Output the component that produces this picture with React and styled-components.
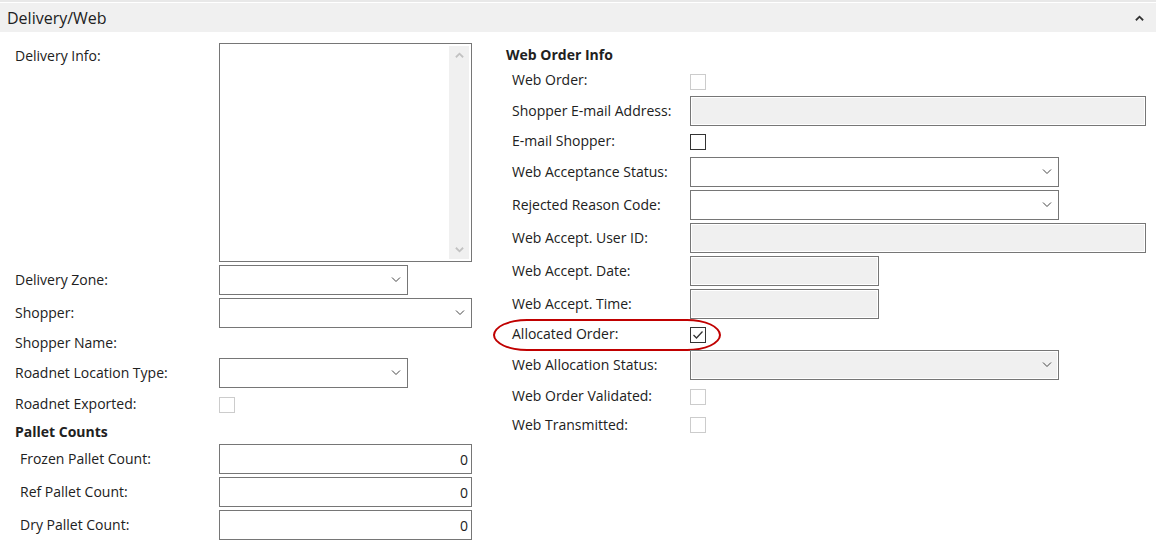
import React from "react";
import styled, { createGlobalStyle } from "styled-components";

const GlobalStyle = createGlobalStyle`
  body {
    margin: 0;
    background: #ffffff;
    font-family: "Open Sans", "Noto Sans", sans-serif;
    font-size: 14px;
    color: #212121;
  }
`;

const Page = styled.div`
  width: 1166px;
  height: 553px;
  overflow: hidden;
`;

const TopRule = styled.div`
  width: 1156px;
  height: 2px;
  background: #e8e8e8;
  margin-bottom: 1px;
`;

const Header = styled.div`
  width: 1156px;
  height: 29px;
  box-sizing: border-box;
  padding: 0 12px 0 7px;
  background: #f0f0f0;
  display: flex;
  align-items: center;
  justify-content: space-between;
  font-size: 16px;
`;

const Body = styled.div`
  display: flex;
  padding: 11px 0 0 15px;
`;

const Column = styled.div`
  display: flex;
  flex-direction: column;
  gap: 3px;
  width: ${(p) => p.width}px;
  margin-left: ${(p) => p.offset || 0}px;
`;

const Row = styled.div`
  position: relative;
  display: flex;
  align-items: ${(p) => (p.top ? "flex-start" : "center")};
  height: ${(p) => p.h}px;
  padding-left: ${(p) => p.indent || 0}px;
`;

const Label = styled.div`
  width: ${(p) => p.w}px;
  flex-shrink: 0;
  white-space: nowrap;
  padding-top: ${(p) => p.pt || 0}px;
  padding-bottom: ${(p) => (p.pt ? 0 : 2)}px;
`;

const Heading = styled.div`
  font-weight: 700;
  font-size: 14px;
  display: flex;
  align-items: flex-end;
  height: ${(p) => p.h}px;
`;

const Box = styled.div`
  position: relative;
  width: ${(p) => p.w}px;
  height: ${(p) => p.h || 30}px;
  box-sizing: border-box;
  border: 1px solid #767676;
  background: ${(p) => (p.disabled ? "#f0f0f0" : "#ffffff")};
  box-shadow: ${(p) => (p.disabled ? "inset 0 0 0 1px #ffffff" : "none")};
  display: flex;
  align-items: center;
  justify-content: flex-end;
  padding-right: ${(p) => (p.select ? 6 : 3)}px;
`;

const TextArea = styled.div`
  width: 253px;
  height: 219px;
  box-sizing: border-box;
  border: 1px solid #767676;
  background: #ffffff;
  display: flex;
  justify-content: flex-end;
  padding: 2px;
`;

const ScrollTrack = styled.div`
  width: 20px;
  height: 100%;
  background: #f0f0f0;
  display: flex;
  flex-direction: column;
  justify-content: space-between;
  align-items: center;
  padding: 6px 0;
  box-sizing: border-box;
`;

const Check = styled.div`
  width: 16px;
  height: 16px;
  box-sizing: border-box;
  border: 1px solid ${(p) => (p.disabled ? "#cccccc" : "#333333")};
  background: #ffffff;
  display: flex;
  align-items: center;
  justify-content: center;
  margin-top: ${(p) => p.shift || 0}px;
`;

const Ring = styled.div`
  position: absolute;
  left: -13px;
  top: -3px;
  width: 228px;
  height: 32px;
  box-sizing: border-box;
  border: 2px solid #c00000;
  border-radius: 34px / 16px;
  pointer-events: none;
`;

const Chevron = ({ up, color = "#444", stroke = 1, w = 10, h = 6 }) => (
  <svg width={w} height={h} viewBox="0 0 10 6">
    <polyline
      points={up ? "1,5.5 5,1.5 9,5.5" : "1,0.5 5,4.5 9,0.5"}
      fill="none"
      stroke={color}
      strokeWidth={stroke}
    />
  </svg>
);

const Tick = () => (
  <svg width="12" height="10" viewBox="0 0 12 10">
    <polyline points="1.5,5 4.5,8 10.5,1.5" fill="none" stroke="#333" strokeWidth="1.3" />
  </svg>
);

const Select = ({ w, disabled }) => (
  <Box w={w} select disabled={disabled}>
    <Chevron />
  </Box>
);

export default function App() {
  return (
    <Page>
      <GlobalStyle />
      <TopRule />
      <Header>
        <span>Delivery/Web</span>
        <Chevron up color="#333" stroke={2} w={9} h={6} />
      </Header>
      <Body>
        <Column width={457}>
          <Row h={219} top>
            <Label w={204} pt={3}>Delivery Info:</Label>
            <TextArea>
              <ScrollTrack>
                <Chevron up color="#c2c2c2" stroke={2} w={9} h={6} />
                <Chevron color="#c2c2c2" stroke={2} w={9} h={6} />
              </ScrollTrack>
            </TextArea>
          </Row>
          <Row h={30}>
            <Label w={204}>Delivery Zone:</Label>
            <Select w={189} />
          </Row>
          <Row h={30}>
            <Label w={204}>Shopper:</Label>
            <Select w={253} />
          </Row>
          <Row h={24}>
            <Label w={204}>Shopper Name:</Label>
          </Row>
          <Row h={30}>
            <Label w={204}>Roadnet Location Type:</Label>
            <Select w={189} />
          </Row>
          <Row h={26}>
            <Label w={204}>Roadnet Exported:</Label>
            <Check disabled shift={2} />
          </Row>
          <Heading h={21}>Pallet Counts</Heading>
          {["Frozen Pallet Count:", "Ref Pallet Count:", "Dry Pallet Count:"].map((l) => (
            <Row h={30} indent={5} key={l}>
              <Label w={199}>{l}</Label>
              <Box w={253}>0</Box>
            </Row>
          ))}
        </Column>

        <Column width={650} offset={34}>
          <Heading h={21}>Web Order Info</Heading>
          <Row h={26} indent={6}>
            <Label w={178}>Web Order:</Label>
            <Check disabled shift={3} />
          </Row>
          <Row h={30} indent={6}>
            <Label w={178}>Shopper E-mail Address:</Label>
            <Box w={456} disabled />
          </Row>
          <Row h={25} indent={6}>
            <Label w={178}>E-mail Shopper:</Label>
            <Check shift={1} />
          </Row>
          <Row h={30} indent={6}>
            <Label w={178}>Web Acceptance Status:</Label>
            <Select w={369} />
          </Row>
          <Row h={30} indent={6}>
            <Label w={178}>Rejected Reason Code:</Label>
            <Select w={369} />
          </Row>
          <Row h={30} indent={6}>
            <Label w={178}>Web Accept. User ID:</Label>
            <Box w={456} disabled />
          </Row>
          <Row h={30} indent={6}>
            <Label w={178}>Web Accept. Date:</Label>
            <Box w={189} disabled />
          </Row>
          <Row h={30} indent={6}>
            <Label w={178}>Web Accept. Time:</Label>
            <Box w={189} disabled />
          </Row>
          <Row h={25} indent={6}>
            <Ring />
            <Label w={178}>Allocated Order:</Label>
            <Check shift={1}>
              <Tick />
            </Check>
          </Row>
          <Row h={30} indent={6}>
            <Label w={178}>Web Allocation Status:</Label>
            <Select w={369} disabled />
          </Row>
          <Row h={26} indent={6}>
            <Label w={178}>Web Order Validated:</Label>
            <Check disabled shift={1} />
          </Row>
          <Row h={26} indent={6}>
            <Label w={178}>Web Transmitted:</Label>
            <Check disabled />
          </Row>
        </Column>
      </Body>
    </Page>
  );
}
